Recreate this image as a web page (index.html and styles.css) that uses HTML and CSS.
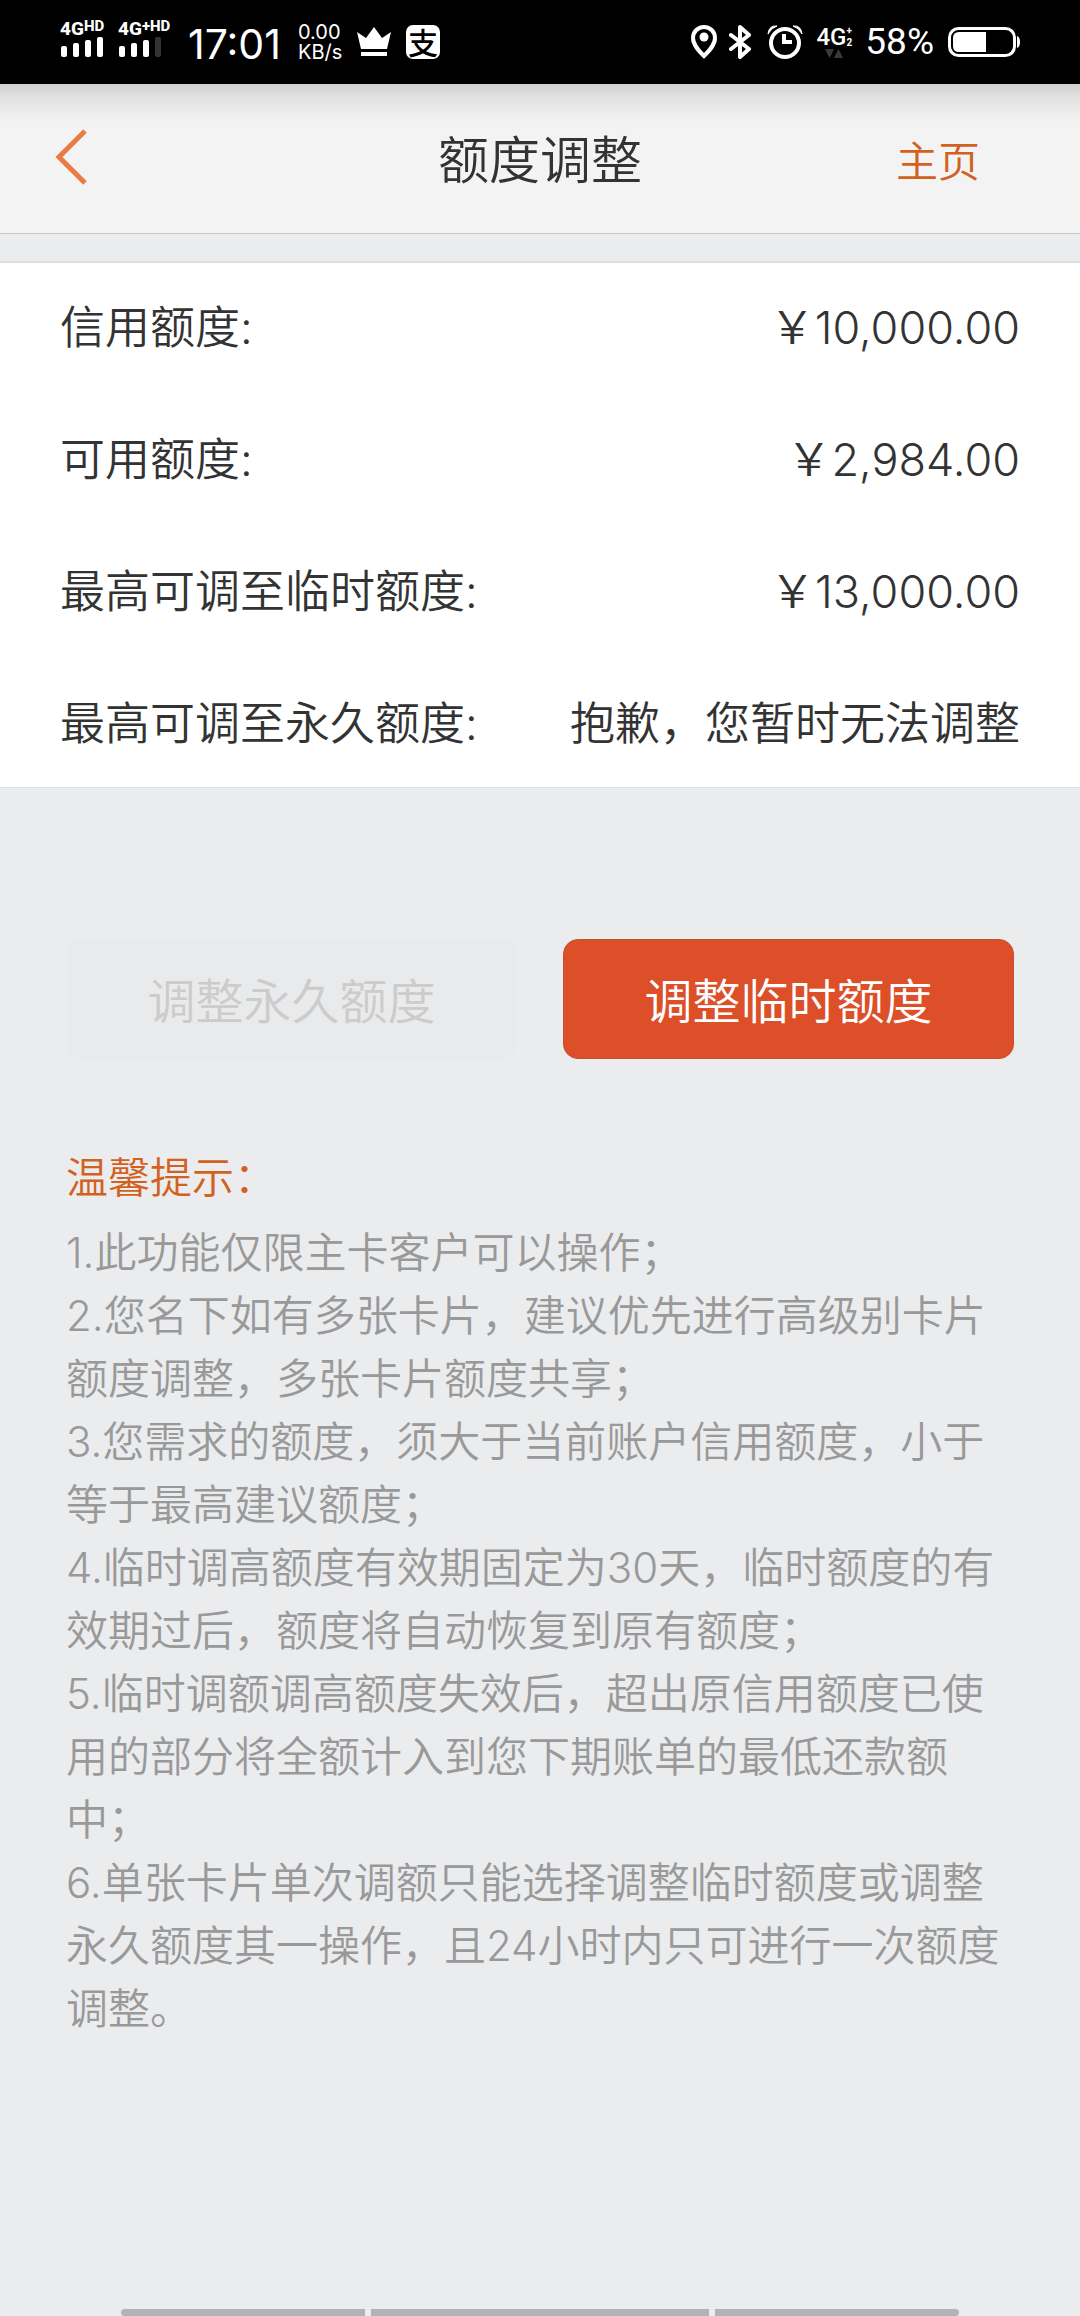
FILE: index.html
```html
<!DOCTYPE html>
<html lang="zh-CN">
<head>
<meta charset="utf-8">
<meta name="viewport" content="width=device-width, initial-scale=1">
<title>额度调整</title>
<link rel="stylesheet" href="styles.css">
</head>
<body>
<div class="status">
  <div class="status-group">
    <div class="signal">
      <div class="net">4G<sup>HD</sup></div>
      <svg width="44" height="20" viewBox="0 0 44 20" fill="#fff"><rect x="1" y="9" width="6" height="11" rx="2"/><rect x="13" y="6" width="6" height="14" rx="2"/><rect x="25" y="3" width="6" height="17" rx="2"/><rect x="37" y="0" width="6" height="20" rx="2"/></svg>
    </div>
    <div class="signal signal-second">
      <div class="net">4G<sup>+HD</sup></div>
      <svg width="44" height="20" viewBox="0 0 44 20" fill="#fff"><rect x="1" y="9" width="6" height="11" rx="2"/><rect x="13" y="6" width="6" height="14" rx="2"/><rect x="25" y="3" width="6" height="17" rx="2"/><rect x="37" y="0" width="6" height="20" rx="2" fill="#333"/></svg>
    </div>
    <div class="clock">17:01</div>
    <div class="speed"><span>0.00</span><span>KB/s</span></div>
    <svg class="crown" width="34" height="30" viewBox="0 0 34 30" fill="#fff"><path d="M0 5 L9 11 L17 0 L25 11 L34 5 L30 22 H4 Z"/><rect x="4" y="25" width="26" height="4"/></svg>
    <div class="pay">支</div>
  </div>
  <div class="status-group status-right">
    <svg width="26" height="34" viewBox="0 0 26 34"><path d="M13 2 C6.500 2 2 7 2 13 C2 20 8 26 13 31 C18 26 24 20 24 13 C24 7 19.500 2 13 2 Z" fill="none" stroke="#fff" stroke-width="4"/><circle cx="13" cy="12" r="4.500" fill="#fff"/></svg>
    <svg width="22" height="34" viewBox="0 0 22 34" fill="none" stroke="#fff" stroke-width="4" stroke-linejoin="round" stroke-linecap="round"><path d="M2 10 L20 24 L11 32 V2 L20 10 L2 24"/></svg>
    <svg class="alarm" width="36" height="34" viewBox="0 0 36 34"><circle cx="18" cy="18" r="14" fill="none" stroke="#fff" stroke-width="4"/><path d="M17 9 V17 H25" fill="none" stroke="#fff" stroke-width="4"/><path d="M1 9 Q2 0 10 1 Q4 3 1 9 Z M35 9 Q34 0 26 1 Q32 3 35 9 Z" fill="#fff" stroke="#fff"/></svg>
    <div class="mobile">
      <div class="mobile-net">4G<span class="mobile-marks"><span>+</span><span>2</span></span></div>
      <svg width="18" height="10" viewBox="0 0 18 10" fill="#3a3a3a"><path d="M0 0 H9 L4.500 9 Z M9 9 H18 L13.500 0 Z"/></svg>
    </div>
    <div class="percent">58%</div>
    <svg width="72" height="30" viewBox="0 0 72 30"><rect x="1.500" y="1.500" width="65" height="27" rx="9" fill="none" stroke="#fff" stroke-width="3"/><path d="M38 5 V25 H11 Q5 25 5 19 V11 Q5 5 11 5 Z" fill="#fff"/><path d="M69 9 Q72 10 72 15 Q72 20 69 21 Z" fill="#fff"/></svg>
  </div>
</div>

<header class="header">
  <a class="back" href="#" aria-label="返回"><svg width="34" height="56" viewBox="0 0 34 56" fill="none" stroke="#e97c44" stroke-width="5"><path d="M31 2 L5 28 L31 54"/></svg></a>
  <h1 class="title">额度调整</h1>
  <a class="home" href="#">主页</a>
</header>

<main>
  <dl class="limits">
    <div class="row"><dt>信用额度:</dt><dd>￥10,000.00</dd></div>
    <div class="row"><dt>可用额度:</dt><dd>￥2,984.00</dd></div>
    <div class="row"><dt>最高可调至临时额度:</dt><dd>￥13,000.00</dd></div>
    <div class="row"><dt>最高可调至永久额度:</dt><dd>抱歉，您暂时无法调整</dd></div>
  </dl>

  <div class="actions">
    <button class="btn" type="button" disabled>调整永久额度</button>
    <button class="btn btn-primary" type="button">调整临时额度</button>
  </div>

  <section class="tips">
    <h2 class="tips-title">温馨提示：</h2>
    <p>1.此功能仅限主卡客户可以操作；</p>
    <p>2.您名下如有多张卡片，建议优先进行高级别卡片额度调整，多张卡片额度共享；</p>
    <p>3.您需求的额度，须大于当前账户信用额度，小于等于最高建议额度；</p>
    <p>4.临时调高额度有效期固定为30天，临时额度的有效期过后，额度将自动恢复到原有额度；</p>
    <p>5.临时调额调高额度失效后，超出原信用额度已使用的部分将全额计入到您下期账单的最低还款额中；</p>
    <p>6.单张卡片单次调额只能选择调整临时额度或调整永久额度其一操作，且24小时内只可进行一次额度调整。</p>
  </section>
</main>

<div class="gesture"><span></span><span></span><span></span></div>
</body>
</html>
```
FILE: styles.css
```css
* {
  box-sizing: border-box;
}

body {
  margin: 0;
  min-height: 100vh;
  display: flex;
  flex-direction: column;
  background: #ebecee;
  color: #333;
  font-family: Inter, "Noto Sans CJK SC", sans-serif;
  font-weight: 350;
}

a {
  text-decoration: none;
}

/* System status bar */
.status {
  height: 84px;
  padding: 0 60px;
  display: flex;
  justify-content: space-between;
  background: #000;
  color: #fff;
  line-height: 1;
}

.status-group {
  display: flex;
  align-items: center;
}

.signal {
  width: 46px;
  display: flex;
  flex-direction: column;
  margin-bottom: 6px;
}

.signal-second {
  width: 58px;
  margin-left: 12px;
}

.signal svg {
  display: block;
}

.net {
  display: flex;
  align-items: flex-start;
  height: 16px;
  font: 800 19px/16px Roboto, sans-serif;
}

.net sup {
  font-size: 15px;
  line-height: 11px;
}

.clock {
  margin-left: 12px;
  padding-top: 4px;
  width: 96px;
  font: 400 41px/48px Inter, sans-serif;
}

.speed {
  margin-left: 14px;
  width: 46px;
  display: flex;
  flex-direction: column;
  font: 400 20px/20px Inter, sans-serif;
}

.crown {
  margin-left: 13px;
}

.pay {
  margin-left: 15px;
  width: 34px;
  height: 34px;
  border-radius: 7px;
  background: #fff;
  color: #000;
  font: 500 30px/32px "Noto Sans CJK SC", sans-serif;
  text-align: center;
}

.status-right {
  gap: 12px;
}

.alarm {
  margin-left: 4px;
}

.mobile {
  width: 38px;
  display: flex;
  flex-direction: column;
  align-items: center;
}

.mobile-net {
  display: flex;
  font: 500 24px/24px Roboto, sans-serif;
}

.mobile-marks {
  display: flex;
  flex-direction: column;
  font-size: 10px;
  font-weight: 700;
  line-height: 12px;
}

.percent {
  margin-right: 2px;
  font: 400 37px/40px Roboto, sans-serif;
}

/* Page header */
.header {
  height: 150px;
  padding: 0 100px 0 54px;
  display: grid;
  grid-template-columns: 46px 1fr auto;
  align-items: center;
  background: linear-gradient(#cfcfcf, #e0e0e0 12px, #f3f3f3 38px);
  border-bottom: 1px solid #c8c9ca;
}

.back {
  padding-bottom: 4px;
}

.back svg {
  display: block;
}

.title {
  margin: 0;
  padding: 4px 0 0 84px;
  font-size: 51px;
  font-weight: 350;
  line-height: 60px;
  text-align: center;
}

.home {
  color: #d2611f;
  font-size: 42px;
}

/* Credit limits */
.limits {
  margin: 27px 0 0;
  padding-bottom: 2px;
  display: grid;
  gap: 6px;
  border-top: 2px solid #dedfe0;
  border-bottom: 1px solid #dedfe0;
  background: #fff;
}

.row {
  height: 126px;
  padding: 0 60px 4px;
  display: flex;
  justify-content: space-between;
  align-items: center;
  font-size: 45px;
}

.row dd {
  margin: 0;
}

/* Adjustment buttons */
.actions {
  padding: 151px 66px 0;
  display: grid;
  grid-template-columns: 1fr 1fr;
  gap: 46px;
}

.btn {
  height: 120px;
  padding-bottom: 4px;
  border: 0;
  border-radius: 15px;
  background: #e9eaeb;
  color: #ccc;
  font: inherit;
  font-size: 48px;
}

.btn-primary {
  background: #dc4f29;
  border: 1px solid #c4502f;
  color: #fff;
}

/* Notes */
.tips {
  padding: 87px 66px 60px;
  color: #999;
  font-size: 42px;
  line-height: 63px;
}

.tips p {
  margin: 0;
}

.tips-title {
  margin: 0 0 12px;
  color: #d2611f;
  font-size: 42px;
  font-weight: 350;
}

/* Gesture area at the bottom edge */
.gesture {
  margin-top: auto;
  padding: 0 121px;
  display: grid;
  grid-template-columns: 244fr 338fr 244fr;
  gap: 6px;
}

.gesture span {
  height: 7px;
  background: #b2b3b5;
}

.gesture span:first-child {
  border-radius: 4px 0 0 4px;
}

.gesture span:last-child {
  border-radius: 0 4px 4px 0;
}
```
